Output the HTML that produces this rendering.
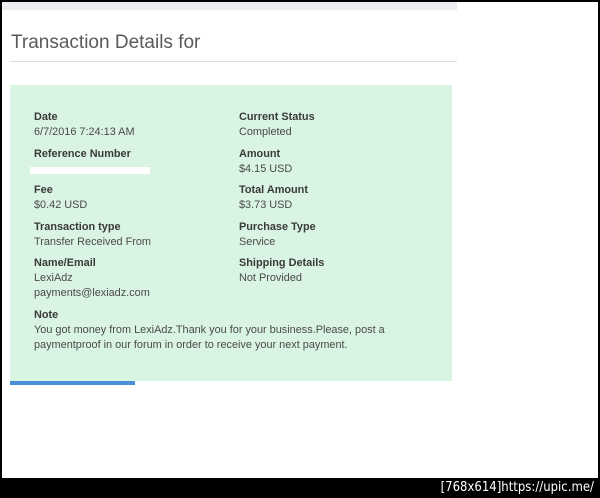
<!DOCTYPE html><html><head><style>
body{margin:0;width:600px;height:498px;background:#000;position:relative;overflow:hidden;font-family:"Liberation Sans",sans-serif}
.page{position:absolute;left:2px;top:2px;width:596px;height:476px;background:#fff}
.top{position:absolute;left:0;top:0;width:455px;height:8px;background:#eceef1}
h1{position:absolute;left:9px;top:30px;margin:0;font-weight:normal;font-size:19px;color:#5a5a5a}
.hr{position:absolute;left:8px;top:59px;width:447px;height:1px;background:#ddd}
.box{position:absolute;left:8px;top:83px;width:442px;height:296px;background:#d9f4e3}
.bar{position:absolute;left:8px;top:379px;width:125px;height:4px;background:#4a90d9}
.t{position:absolute;font-size:10.9px;color:#4a4a4a;line-height:15px;white-space:nowrap}
.b{font-weight:bold;color:#3a3a3a}
.w{position:absolute;left:30px;top:167px;width:120px;height:7px;background:#fff}
.foot{position:absolute;right:6px;bottom:3px;color:#fff;font-family:"DejaVu Sans Condensed","DejaVu Sans",sans-serif;font-size:13px}
</style></head><body>
<div class="page">
<div class="top"></div>
<h1>Transaction Details for</h1>
<div class="hr"></div>
<div class="box"></div>
<div class="bar"></div>
</div>
<div class="t" style="left:34px;top:110px"><span class="b">Date</span><br>6/7/2016 7:24:13 AM</div>
<div class="t" style="left:34px;top:147px"><span class="b">Reference Number</span></div>
<div class="w"></div>
<div class="t" style="left:34px;top:183px"><span class="b">Fee</span><br>$0.42 USD</div>
<div class="t" style="left:34px;top:220px"><span class="b">Transaction type</span><br>Transfer Received From</div>
<div class="t" style="left:34px;top:256px"><span class="b">Name/Email</span><br>LexiAdz<br>payments@lexiadz.com</div>
<div class="t" style="left:34px;top:308px"><span class="b">Note</span><br>You got money from LexiAdz.Thank you for your business.Please, post a<br>paymentproof in our forum in order to receive your next payment.</div>
<div class="t" style="left:239px;top:110px"><span class="b">Current Status</span><br>Completed</div>
<div class="t" style="left:239px;top:147px"><span class="b">Amount</span><br>$4.15 USD</div>
<div class="t" style="left:239px;top:183px"><span class="b">Total Amount</span><br>$3.73 USD</div>
<div class="t" style="left:239px;top:220px"><span class="b">Purchase Type</span><br>Service</div>
<div class="t" style="left:239px;top:256px"><span class="b">Shipping Details</span><br>Not Provided</div>
<div class="foot">[768x614]https://upic.me/</div>
</body></html>
